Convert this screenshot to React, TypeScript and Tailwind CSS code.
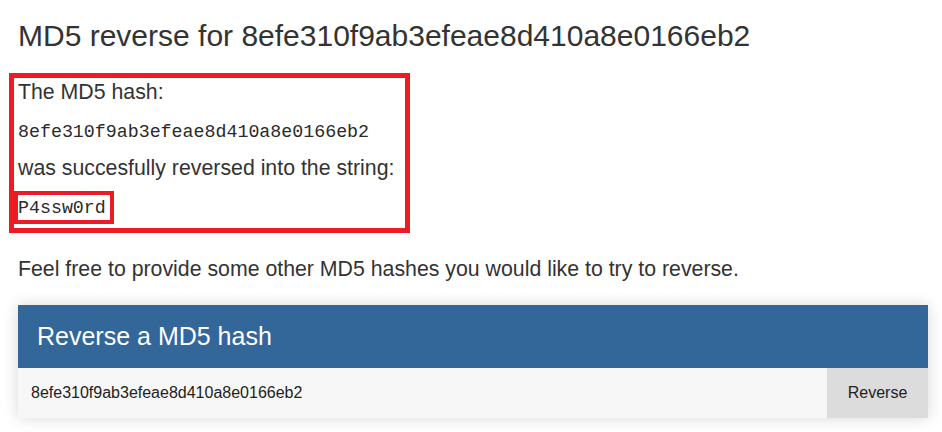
const hash = '8efe310f9ab3efeae8d410a8e0166eb2';

const mono = "font-['Liberation_Mono','Courier_New',monospace] text-[18.3px] leading-none text-[#2a2a2a]";

export default function App() {
  return (
    <div className="min-h-screen bg-white pl-[18px] pr-[14px] pt-[18px] font-['Liberation_Sans',Arial,sans-serif] text-[#333]">
      <h1 className="text-[30px] leading-9 font-normal">MD5 reverse for {hash}</h1>

      <div className="mt-[19px] -ml-[9px] w-[401px] border-[5px] border-[#ed1c24] pl-[4px] pb-[4px] text-[21.3px] leading-7">
        <p className="mb-[10px]">The MD5 hash:</p>
        <p className="mb-[10px]">
          <span className={mono}>{hash}</span>
        </p>
        <p className="mb-[9px]">was succesfully reversed into the string:</p>
        <div className="flex">
          <div className="-ml-[4px] flex h-[33px] items-center border-4 border-[#ed1c24] pr-1 pt-[1px]">
            <span className={mono}>P4ssw0rd</span>
          </div>
        </div>
      </div>

      <p className="mt-[22px] text-[21.3px] leading-7">
        Feel free to provide some other MD5 hashes you would like to try to reverse.
      </p>

      <div className="mt-[22px] shadow-[0_0_14px_rgba(0,0,0,0.16)]">
        <div className="flex h-[63px] items-center bg-[#336699] px-[19px] text-[25px] text-white">
          Reverse a MD5 hash
        </div>
        <form className="flex h-[50px]" onSubmit={(e) => e.preventDefault()}>
          <input
            className="min-w-0 flex-1 bg-[#f7f7f7] px-[13px] text-base text-[#222] outline-none"
            defaultValue={hash}
          />
          <button type="submit" className="w-[101px] bg-[#dcdcdc] text-base text-[#222]">
            Reverse
          </button>
        </form>
      </div>
    </div>
  );
}
